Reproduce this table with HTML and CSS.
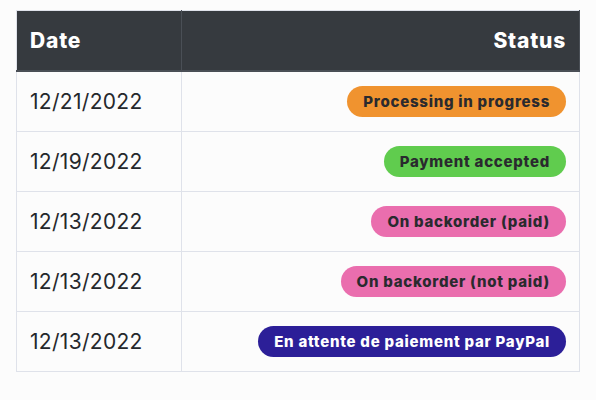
FILE: index.html
```html
<!DOCTYPE html>
<html>
<head>
<meta charset="utf-8">
<link rel="stylesheet" href="styles.css">
</head>
<body>
<table class="orders">
  <thead>
    <tr><th class="col-date">Date</th><th class="col-status">Status</th></tr>
  </thead>
  <tbody>
    <tr><td class="date">12/21/2022</td><td class="status"><span class="badge orange">Processing in progress</span></td></tr>
    <tr><td class="date">12/19/2022</td><td class="status"><span class="badge green">Payment accepted</span></td></tr>
    <tr><td class="date">12/13/2022</td><td class="status"><span class="badge pink">On backorder (paid)</span></td></tr>
    <tr><td class="date">12/13/2022</td><td class="status"><span class="badge pink">On backorder (not paid)</span></td></tr>
    <tr><td class="date">12/13/2022</td><td class="status"><span class="badge purple">En attente de paiement par PayPal</span></td></tr>
  </tbody>
</table>
</body>
</html>
```
FILE: styles.css
```css
html, body {
  margin: 0;
  background: #fcfcfc;
}
body {
  padding: 10px 16px;
  font-family: Inter, "Noto Sans", sans-serif;
  color: #25282c;
}
.orders {
  width: 564px;
  border-collapse: collapse;
  border: 1px solid #dfe2ea;
}
.orders th {
  background: #363a3f;
  color: #fff;
  font-size: 21px;
  font-weight: 800;
  letter-spacing: 0.8px;
  height: 59px;
  padding: 0 13px;
  border-bottom: 2px solid #4a4f56;
  border-right: 1px solid #4a4f56;
}
.col-date { text-align: left; width: 138px; }
.col-status { text-align: right; }
.orders td {
  height: 59px;
  padding: 0 13px;
  border: 1px solid #dfe2ea;
  background: #fcfcfc;
}
.date {
  font-size: 21px;
  font-weight: 400;
  letter-spacing: 0.3px;
}
.status { text-align: right; }
.badge {
  display: inline-block;
  font-size: 15px;
  font-weight: 800;
  letter-spacing: 0.75px;
  line-height: 31px;
  padding: 0 16px;
  border-radius: 16px;
  color: #2a2a2e;
}
.orange { background: #f0932f; }
.green { background: #60cc4e; }
.pink { background: #ea6eae; }
.purple { background: #2c1f98; color: #fff; }
```
